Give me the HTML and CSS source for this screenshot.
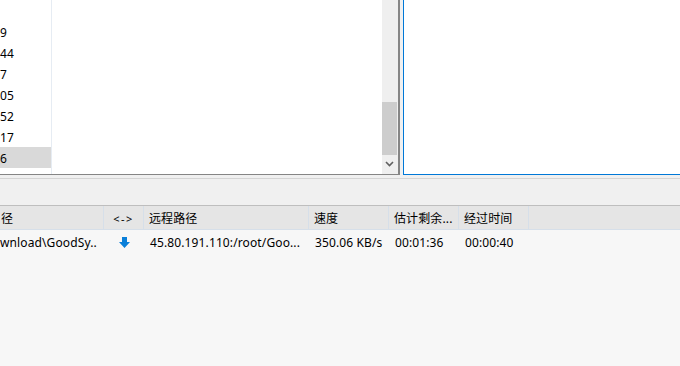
FILE: index.html
```html
<!DOCTYPE html>
<html>
<head>
<meta charset="utf-8">
<link rel="stylesheet" href="styles.css">
</head>
<body>
<div class="app">
  <div class="top">
    <div class="left-panel">
      <div class="list">
        <div class="col">
          <div class="item"></div>
          <div class="item">9</div>
          <div class="item">44</div>
          <div class="item">7</div>
          <div class="item">05</div>
          <div class="item">52</div>
          <div class="item">17</div>
          <div class="item sel">6</div>
        </div>
        <div class="col-rest"></div>
      </div>
      <div class="scrollbar">
        <div class="track"><div class="thumb"></div></div>
        <div class="arrow">
          <svg width="9" height="6" viewBox="0 0 9 6"><path d="M1 1 L4.5 4.5 L8 1" fill="none" stroke="#606060" stroke-width="1.6"/></svg>
        </div>
      </div>
    </div>
    <div class="gap"></div>
    <div class="right-panel"></div>
  </div>
  <div class="splitter"></div>
  <div class="toolbar"></div>
  <div class="table">
    <div class="th first">径</div>
    <div class="th center">&lt;-&gt;</div>
    <div class="th">远程路径</div>
    <div class="th">速度</div>
    <div class="th">估计剩余...</div>
    <div class="th">经过时间</div>
    <div class="th last"></div>

    <div class="td first">wnload\GoodSy..</div>
    <div class="td center">
      <svg width="11" height="11" viewBox="0 0 11 11"><path d="M3 0 H8 V5 H11 L5.5 11 L0 5 H3 Z" fill="#0a7fd9"/></svg>
    </div>
    <div class="td">45.80.191.110:/root/Goo...</div>
    <div class="td">350.06 KB/s</div>
    <div class="td">00:01:36</div>
    <div class="td">00:00:40</div>
    <div class="td"></div>
  </div>
</div>
</body>
</html>
```

FILE: styles.css
```css
* { box-sizing: border-box; }
html, body { margin: 0; padding: 0; }
body {
  width: 680px;
  height: 366px;
  overflow: hidden;
  background: #f7f7f7;
  font-family: "Noto Sans", "Noto Sans CJK SC", sans-serif;
  font-size: 12px;
  letter-spacing: 0.12px;
  color: #000;
}
.app { display: flex; flex-direction: column; height: 366px; }
.top {
  display: flex;
  height: 175px;
  background: #f0f0f0;
}
.left-panel {
  width: 400px;
  display: flex;
  background: #fff;
  border-right: 2px solid #858585;
  border-bottom: 1px solid #858585;
}
.list { flex: 1; display: flex; }
.col {
  width: 52px;
  border-right: 1px solid #e6ecf3;
  overflow: hidden;
}
.item {
  height: 21px;
  line-height: 21px;
  padding-top: 1px;
  white-space: nowrap;
}
.item.sel { background: #d9d9d9; width: 51px; }
.col-rest { flex: 1; }
.scrollbar {
  width: 16px;
  background: #efefef;
  display: flex;
  flex-direction: column;
}
.track { flex: 1; padding-top: 102px; }
.thumb { height: 53px; background: #cdcdcd; margin-right: 1px; }
.arrow {
  height: 18px;
  display: flex;
  align-items: center;
  justify-content: center;
  padding-right: 1px;
  padding-bottom: 2px;
}
.gap { width: 3px; background: #f0f0f0; }
.right-panel {
  flex: 1;
  background: #fff;
  border-left: 1px solid #0078d7;
  border-bottom: 1px solid #0078d7;
}
.splitter {
  height: 4px;
  background: #f0f0f0;
  border-bottom: 1px solid #d4d4d4;
}
.toolbar {
  height: 27px;
  background: #f0f0f0;
  border-bottom: 1px solid #bebebe;
}
.table {
  flex: 1;
  display: grid;
  grid-template-columns: 104px 40px 165px 80px 70px 70px 1fr;
  grid-template-rows: 24px 23px;
  align-content: start;
  background: #f7f7f7;
}
.th {
  background: #e5e5e5;
  border-bottom: 1px solid #d6dfe9;
  border-right: 1px solid #d6dfe9;
  padding-left: 5px;
  padding-top: 2px;
  line-height: 21px;
  white-space: nowrap;
  overflow: hidden;
}
.th.first { padding-left: 1px; }
.th.last { border-right: none; }
.th.center { text-align: center; padding-left: 0; font-size: 11px; letter-spacing: 1.5px; }
.td {
  padding-left: 6px;
  padding-top: 1px;
  line-height: 23px;
  white-space: nowrap;
  overflow: hidden;
}
.td.first { padding-left: 0; }
.td.center {
  padding-left: 0;
  display: flex;
  align-items: center;
  justify-content: center;
  padding-top: 1px;
}
```
